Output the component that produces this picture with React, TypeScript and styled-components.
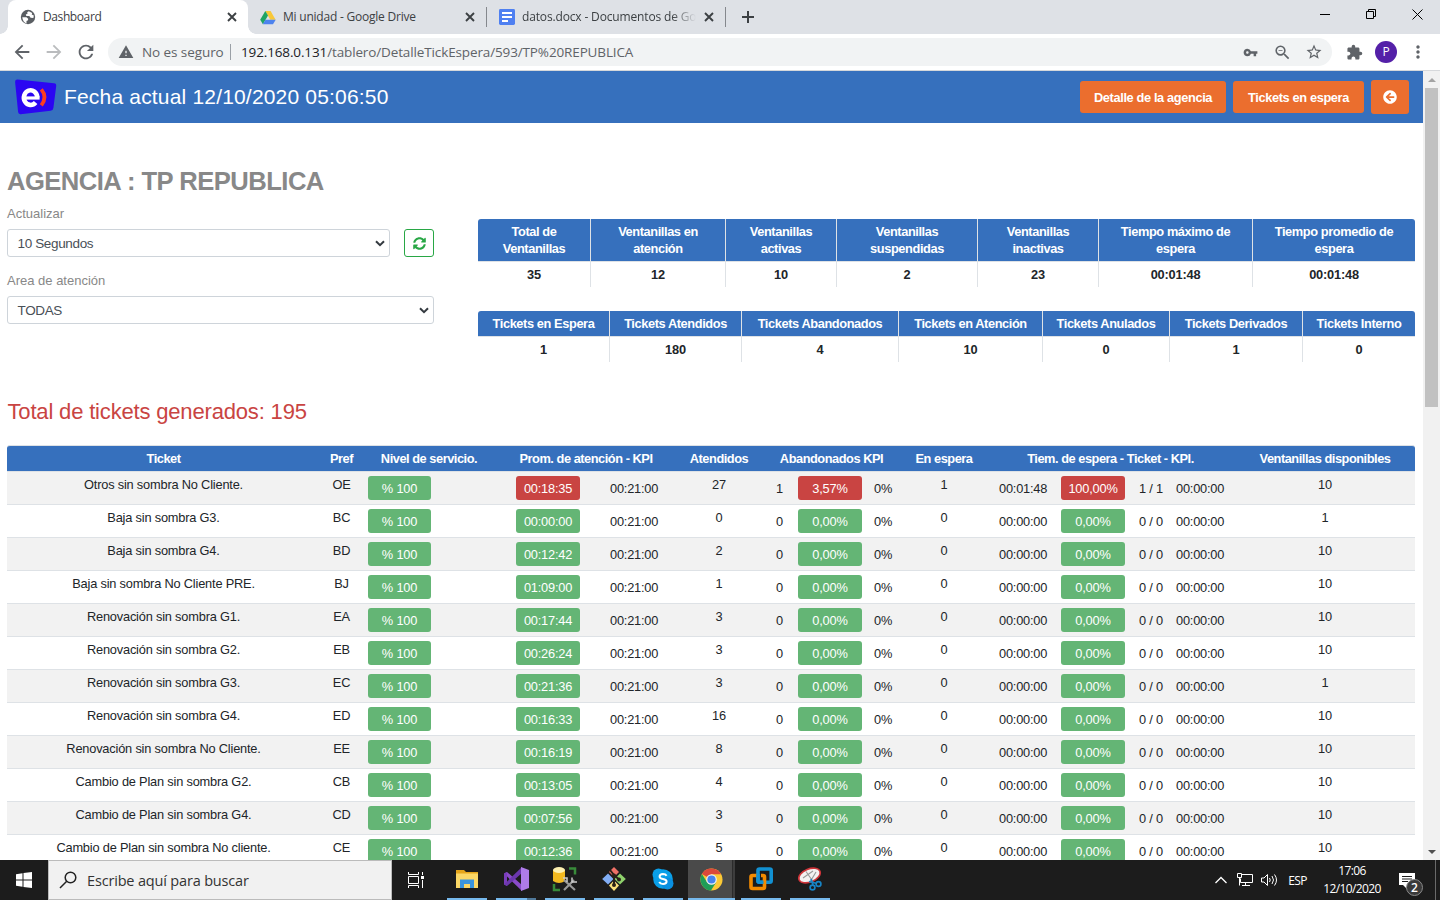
import React from "react";
import styled, { createGlobalStyle } from "styled-components";
import {
  MdArrowBack,
  MdArrowForward,
  MdExtension,
  MdMoreVert,
  MdRefresh,
  MdStarBorder,
  MdVpnKey,
  MdWarning,
  MdZoomOut,
} from "react-icons/md";
import { FaArrowCircleLeft, FaSyncAlt } from "react-icons/fa";

const GlobalStyle = createGlobalStyle`
  * { box-sizing: border-box; }
  body { margin: 0; overflow: hidden; background: #fff; }
`;

const sans = `"Liberation Sans", Arial, sans-serif`;
const ui = `"Open Sans", "Noto Sans", sans-serif`;
const blue = "#3670bd";

const Screen = styled.div`
  width: 1440px;
  height: 900px;
  display: flex;
  flex-direction: column;
  overflow: hidden;
  font-family: ${sans};
  color: #212529;
`;

/* ---------- browser ---------- */

const TabStrip = styled.div`
  height: 34px;
  flex: none;
  display: flex;
  background: #dee1e6;
  padding-left: 8px;
  font-family: ${ui};
`;

const Tab = styled.div<{ $active?: boolean; $width: number }>`
  position: relative;
  width: ${(p) => p.$width}px;
  height: 34px;
  display: flex;
  align-items: center;
  padding: 0 11px 0 12px;
  background: ${(p) => (p.$active ? "#fff" : "transparent")};
  border-radius: 8px 8px 0 0;
  ${(p) =>
    p.$active &&
    `&::before, &::after {
      content: "";
      position: absolute;
      bottom: 0;
      width: 8px;
      height: 8px;
    }
    &::before { left: -8px; background: radial-gradient(circle at 0 0, #dee1e6 7.5px, #fff 8px); }
    &::after { right: -8px; background: radial-gradient(circle at 100% 0, #dee1e6 7.5px, #fff 8px); }`}
`;

const TabTitle = styled.span<{ $spacing: number; $fade?: boolean }>`
  flex: 1;
  margin-left: 7px;
  margin-right: 8px;
  overflow: hidden;
  white-space: nowrap;
  font-size: 12px;
  line-height: 18px;
  letter-spacing: ${(p) => p.$spacing}px;
  color: #3c4043;
  ${(p) => p.$fade && `mask-image: linear-gradient(to right, #000 86%, transparent 100%);`}
`;

const TabDivider = styled.div`
  width: 1px;
  height: 20px;
  margin-top: 7px;
  background: #85888d;
`;

const NewTab = styled.div`
  width: 44px;
  display: flex;
  align-items: center;
  justify-content: center;
`;

const WindowButtons = styled.div`
  margin-left: auto;
  display: flex;
  height: 29px;
`;

const WindowButton = styled.div`
  width: 46px;
  display: flex;
  align-items: center;
  justify-content: center;
`;

const Toolbar = styled.div`
  height: 37px;
  flex: none;
  display: flex;
  align-items: center;
  padding: 0 6px;
  border-bottom: 1px solid #d6d8db;
  background: #fff;
  font-family: ${ui};
`;

const IconSlot = styled.div<{ $color?: string }>`
  width: 32px;
  flex: none;
  display: flex;
  align-items: center;
  justify-content: center;
  color: ${(p) => p.$color ?? "#5f6368"};
`;

const Omnibox = styled.div`
  flex: 1;
  height: 28px;
  margin: 0 6px;
  padding: 0 2px 0 10px;
  display: flex;
  align-items: center;
  border-radius: 14px;
  background: #f1f3f4;
  font-size: 13.5px;
  line-height: 20px;
  white-space: nowrap;
  color: #5f6368;
`;

const Security = styled.span`
  width: 88px;
  margin-left: 8px;
  letter-spacing: -0.08px;
`;

const OmniDivider = styled.div`
  width: 1px;
  height: 16px;
  margin-right: 10px;
  background: #9aa0a6;
`;

const Url = styled.span`
  flex: 1;
  letter-spacing: -0.13px;
  b { font-weight: 400; color: #202124; }
`;

const Avatar = styled.div`
  width: 22px;
  height: 22px;
  border-radius: 50%;
  background: #5420a8;
  color: #fff;
  font-size: 12px;
  line-height: 22px;
  text-align: center;
`;

/* ---------- page ---------- */

const Viewport = styled.div`
  height: 789px;
  flex: none;
  display: flex;
  overflow: hidden;
`;

const Page = styled.main`
  width: 1423px;
  height: 789px;
  overflow: hidden;
`;

const Scrollbar = styled.div`
  width: 17px;
  height: 789px;
  display: flex;
  flex-direction: column;
  align-items: center;
  background: #f1f1f1;
`;

const ScrollArrow = styled.div`
  height: 17px;
  display: flex;
  align-items: center;
`;

const ScrollThumb = styled.div`
  width: 13px;
  height: 319px;
  margin-bottom: auto;
  background: #c1c1c1;
`;

const Header = styled.header`
  height: 52px;
  display: flex;
  align-items: center;
  padding: 0 14px;
  background: ${blue};
  color: #fff;
`;

const HeaderTitle = styled.div`
  flex: 1;
  margin-left: 7px;
  font-size: 21px;
  letter-spacing: 0.18px;
  line-height: 30px;
`;

const HeaderButton = styled.button<{ $width: number; $tall?: boolean }>`
  width: ${(p) => p.$width}px;
  height: ${(p) => (p.$tall ? 34 : 32)}px;
  margin-left: 7px;
  padding: 0;
  display: flex;
  align-items: center;
  justify-content: center;
  border: 0;
  border-radius: 3px;
  background: #eb6e2e;
  color: #fff;
  font: bold 12.8px ${sans};
  letter-spacing: -0.37px;
`;

const Overview = styled.section`
  display: flex;
  height: 268px;
  padding: 42px 8px 0 7px;
`;

const Filters = styled.div`
  width: 427px;
  margin-right: 44px;
`;

const Agency = styled.h1`
  margin: 0;
  font-size: 25.6px;
  line-height: 32px;
  font-weight: bold;
  letter-spacing: -0.53px;
  color: #888;
  white-space: nowrap;
`;

const FieldLabel = styled.div<{ $top: number }>`
  margin-top: ${(p) => p.$top}px;
  height: 19px;
  font-size: 13px;
  line-height: 19px;
  color: #888;
`;

const FieldRow = styled.div`
  display: flex;
  justify-content: space-between;
  margin-top: 6px;
`;

const Select = styled.div<{ $width: number }>`
  width: ${(p) => p.$width}px;
  height: 28px;
  display: flex;
  align-items: center;
  justify-content: space-between;
  padding: 0 4px 0 9.5px;
  border: 1px solid #ced4da;
  border-radius: 3px;
  font-size: 13.5px;
  letter-spacing: -0.35px;
  color: #495057;
`;

const RefreshButton = styled.button`
  width: 30px;
  height: 28px;
  padding: 0;
  display: flex;
  align-items: center;
  justify-content: center;
  border: 1px solid #28a745;
  border-radius: 3px;
  background: #fff;
  color: #28a745;
`;

const Stats = styled.div`
  width: 937px;
  padding-top: 54px;
`;

const StatTable = styled.div<{ $columns: string; $head: number }>`
  display: grid;
  grid-template-columns: ${(p) => p.$columns};
  grid-template-rows: ${(p) => p.$head}px 26px;
  margin-bottom: 24px;
  border-radius: 3px 3px 0 0;
  overflow: hidden;
  font-size: 12.8px;
  line-height: 17px;
  font-weight: bold;
  text-align: center;
`;

const StatHead = styled.div`
  display: flex;
  align-items: center;
  justify-content: center;
  background: ${blue};
  color: #fff;
  letter-spacing: -0.4px;
  white-space: pre-line;
  border-right: 1px solid #dee2e6;
  &:nth-child(7) { border-right: 0; }
`;

const StatValue = styled.div`
  padding-top: 4px;
  border-top: 1px solid #dee2e6;
  border-right: 1px solid #dee2e6;
  letter-spacing: -0.2px;
  &:last-child { border-right: 0; }
`;

const Total = styled.h2`
  margin: 0 0 0 7.5px;
  height: 54px;
  padding-top: 6px;
  font-size: 22px;
  line-height: 30px;
  font-weight: 400;
  letter-spacing: -0.17px;
  color: #c94442;
`;

const TicketTable = styled.div`
  width: 1408px;
  margin-left: 7px;
  font-size: 12.8px;
  line-height: 18px;
`;

const TicketRow = styled.div<{ $striped?: boolean; $head?: boolean }>`
  display: grid;
  grid-template-columns: 313px 43px 132px 182px 84px 141px 84px 249px 180px;
  height: ${(p) => (p.$head ? 26 : 33)}px;
  border-top: 1px solid #dee2e6;
  text-align: center;
  background: ${(p) => (p.$head ? blue : p.$striped ? "#f2f2f2" : "#fff")};
  ${(p) =>
    p.$head &&
    `color: #fff; font-weight: bold; line-height: 26px; letter-spacing: -0.46px; border-radius: 3px 3px 0 0;`}
`;

const Cell = styled.div`
  padding-top: 4px;
  letter-spacing: -0.19px;
`;

const InlineCell = styled.div<{ $left: number }>`
  display: flex;
  height: 32px;
  align-items: center;
  padding-left: ${(p) => p.$left}px;
  white-space: nowrap;
`;

const Badge = styled.span<{ $bad?: boolean; $width?: number }>`
  width: ${(p) => p.$width ?? 64}px;
  height: 24px;
  border-radius: 3px;
  line-height: 25px;
  text-align: center;
  letter-spacing: -0.2px;
  color: #fff;
  background: ${(p) => (p.$bad ? "#c94442" : "#64b575")};
`;

const Value = styled.span<{ $width: number; $left?: number }>`
  width: ${(p) => p.$width}px;
  margin-left: ${(p) => p.$left ?? 0}px;
  padding-top: 1px;
  text-align: left;
  letter-spacing: -0.22px;
`;

/* ---------- taskbar ---------- */

const Taskbar = styled.footer`
  height: 40px;
  flex: none;
  display: flex;
  background: #1c1c1c;
  color: #fff;
  font-family: ${ui};
`;

const StartButton = styled.div`
  width: 48px;
  display: flex;
  align-items: center;
  justify-content: center;
`;

const Search = styled.div`
  width: 344px;
  display: flex;
  align-items: center;
  padding-left: 10px;
  background: #f1f1f1;
  border: 1px solid #bbb;
  color: #333;
  font-size: 14.5px;
  letter-spacing: -0.17px;
  span { margin-left: 9px; }
`;

const TaskView = styled.div`
  width: 48px;
  display: flex;
  align-items: center;
  justify-content: center;
`;

const Apps = styled.div`
  display: flex;
  margin-left: 2px;
`;

const AppSlot = styled.div<{ $active?: boolean }>`
  width: ${(p) => (p.$active ? 47 : 49)}px;
  margin: ${(p) => (p.$active ? "0 1px" : "0")};
  height: 40px;
  padding: 0 ${(p) => (p.$active ? "0" : "4px 0 5px")};
  background: ${(p) =>
    p.$active ? "linear-gradient(to right, #4a4a4a 44px, #2b2b2b 44px, #2b2b2b 45px, #3d3d3d 45px)" : "none"};
`;

const AppInner = styled.div<{ $stacked?: boolean }>`
  height: 40px;
  display: flex;
  align-items: center;
  justify-content: center;
  padding-bottom: 2px;
  background: ${(p) =>
      p.$stacked ? "linear-gradient(to right, #76b9ed 31px, #50799a 31px)" : "linear-gradient(#76b9ed, #76b9ed)"}
    bottom / 100% 2px no-repeat;
`;

const Tray = styled.div`
  margin-left: auto;
  display: flex;
  align-items: center;
`;

const TraySlot = styled.div<{ $width: number }>`
  width: ${(p) => p.$width}px;
  display: flex;
  justify-content: center;
  font-size: 12px;
  letter-spacing: -0.6px;
`;

const Clock = styled.div`
  width: 76px;
  text-align: center;
  font-size: 12px;
  line-height: 18px;
  letter-spacing: -0.6px;
`;

const Notifications = styled.div`
  position: relative;
  width: 34px;
  height: 40px;
  padding: 12px 0 0 9px;
`;

const Count = styled.span`
  position: absolute;
  left: 16px;
  top: 19px;
  width: 17px;
  height: 17px;
  border: 1px solid #8a8a8a;
  border-radius: 50%;
  background: #3a3a3a;
  font: 600 12px/15px ${ui};
  text-align: center;
`;

const ShowDesktop = styled.div`
  width: 5px;
  height: 40px;
  margin-left: 11px;
  border-left: 1px solid #6a6a6a;
`;

/* ---------- drawings ---------- */

const Cross = () => (
  <svg width="10" height="10" viewBox="0 0 10 10" stroke="#3c4043" strokeWidth="1.9">
    <path d="M1 1l8 8M9 1l-8 8" />
  </svg>
);

const GlobeIcon = () => (
  <svg width="16" height="16" viewBox="0 0 16 16">
    <circle cx="8" cy="8" r="7.2" fill="#5a5e63" />
    <path d="M2.300 8.200h4.200l1.700 1.500-.2 1.600-1.500.8v2.300Q2.700 13 2.300 8.200z" fill="#fff" />
    <path d="M8.800 2.200l-1.600 1 .3 1.500-1.700.9.500 1.300 3 .2 1.300 1.600 2.800.4.400-2.600-2.100-.9.500-1.600z" fill="#fff" />
  </svg>
);

const DriveIcon = () => (
  <svg width="16" height="15" viewBox="0 0 16 15">
    <path d="M5.3 1h5.3l5 8.7h-5.3z" fill="#f8c839" />
    <path d="M5.3 1l2.7 4.6L2.9 14.2.2 9.7z" fill="#1fa463" />
    <path d="M5.4 9.7h10.3L13 14.2H2.8z" fill="#4d83ee" />
  </svg>
);

const DocsIcon = () => (
  <svg width="16" height="16" viewBox="0 0 16 16">
    <rect width="16" height="16" rx="1.4" fill="#4f80f1" />
    <path d="M3 4h10M3 8h10M3 12h6" stroke="#fff" strokeWidth="1.8" />
  </svg>
);

const EntelLogo = () => (
  <svg width="43" height="36" viewBox="0 0 43 36">
    <path d="M3.5.6L40 4.2q2.5.3 2.2 2.8L39.4 29q-.3 2.5-2.8 2.8L6.6 35.2q-2.300.2-2.500-2.100L1.100 3Q1 .5 3.500.6z" fill="#2b06f2" />
    <path d="M23.300 18.300a6.700 7.300 0 1 0-1.700 5.200" fill="none" stroke="#fff" strokeWidth="4.600" />
    <path d="M10 19h15.600" stroke="#fff" strokeWidth="3.200" />
    <path d="M27.300 10.400q6.400 7.600 0 16" fill="none" stroke="#ff3d1f" strokeWidth="3.800" />
  </svg>
);

const Caret = () => (
  <svg width="10" height="7" viewBox="0 0 10 7" fill="none" stroke="#343a40" strokeWidth="2">
    <path d="M1 1.200l4 4 4-4" />
  </svg>
);

const FolderIcon = () => (
  <svg width="22" height="20" viewBox="0 0 22 20">
    <path d="M0 1h8l2 2h12v16H0z" fill="#e5a51a" />
    <path d="M0 4.500h22V19H0z" fill="#fbd766" />
    <path d="M4 10.500h14V19h-4v-4H8v4H4z" fill="#3a94dc" />
  </svg>
);

const VisualStudioIcon = () => (
  <svg width="25" height="24" viewBox="0 0 25 24">
    <path d="M0 6.500l3-1.500L18 18v6z" fill="#8a4bc9" />
    <path d="M0 6.500l3-1.500v14l-3-1.500z" fill="#7a3dbb" />
    <path d="M3 19L18 6V0L0 17.500z" fill="#6b37ad" />
    <path d="M17 0l8 3v18l-8 3z" fill="#ae7be8" />
  </svg>
);

const SqlToolsIcon = () => (
  <svg width="26" height="26" viewBox="0 0 26 26" fill="none">
    <path d="M1 4v11q6 4 12 0V4z" fill="#f2b91f" />
    <ellipse cx="7" cy="4" rx="6" ry="3" fill="#fdf0b0" />
    <path d="M17 2.500h6v6M2 18v6h6" stroke="#388b3a" strokeWidth="2.500" />
    <path d="M12 14l11 10M22 14L12 24" stroke="#999" strokeWidth="2.200" />
    <path d="M20 11.500v4.500h5M11 12h4v4" stroke="#ccc" strokeWidth="1.500" />
  </svg>
);

const GitIcon = () => (
  <svg width="26" height="26" viewBox="0 0 26 26">
    <path d="M13 1l5 5-5 5-5-5z" fill="#f07167" />
    <path d="M7 7.500l5.500 5.500L7 18.500 1.200 13z" fill="#82aef5" />
    <path d="M19 7.500L24.800 13 19 18.500 13.500 13z" fill="#8fd16c" />
    <path d="M13 14.500l5 5-5 5.500-5-5.500z" fill="#fbe07a" />
    <path d="M9 4l4 5v10M13 9l5 4.500" fill="none" stroke="#2a2018" strokeWidth="2" />
    <circle cx="13" cy="9.500" r="2" fill="#2a2018" />
    <circle cx="18" cy="13.500" r="2" fill="#2a2018" />
    <circle cx="13" cy="19" r="2" fill="#2a2018" />
  </svg>
);

const SkypeIcon = () => (
  <svg width="22" height="22" viewBox="0 0 22 22">
    <circle cx="11" cy="11" r="9.800" fill="#0a9fe8" />
    <circle cx="6.500" cy="6.500" r="6" fill="#0a9fe8" />
    <circle cx="15.500" cy="15.500" r="6" fill="#0a8fe0" />
    <path d="M14.600 7.800Q13.500 6 11 6 7.600 6.100 7.600 8.400q0 1.900 3.400 2.500 3.600.6 3.600 2.700 0 2.400-3.600 2.500-2.600 0-3.800-2" fill="none" stroke="#fff" strokeWidth="2" />
  </svg>
);

const ChromeIcon = () => (
  <svg width="23" height="23" viewBox="0 0 24 24">
    <circle cx="12" cy="12" r="11.500" fill="#fbc936" />
    <path d="M12 12L2 6.200A11.500 11.500 0 0 1 22 6.500H12z" fill="#dc483b" />
    <path d="M2 6.200A11.500 11.500 0 0 0 11.500 23.500L17 14.700 7.200 14.500z" fill="#1f9d58" />
    <circle cx="12" cy="12" r="5.500" fill="#f4f4f4" />
    <circle cx="12" cy="12" r="4.300" fill="#4683ee" />
  </svg>
);

const VmwareIcon = () => (
  <svg width="24" height="24" viewBox="0 0 24 24" fill="none" strokeWidth="3.600">
    <rect x="9" y="2" width="13.200" height="13.200" rx="1.500" stroke="#1291d2" />
    <path d="M8 8.500H3.500q-1.500 0-1.500 1.500v10q0 1.500 1.500 1.500h10.500q1.500 0 1.500-1.500v-10q0-1.500-1.500-1.500h-2" stroke="#f38b00" />
    <path d="M9 7v6.700q0 1.500 1.500 1.500h4" stroke="#1291d2" />
  </svg>
);

const SnipIcon = () => (
  <svg width="26" height="26" viewBox="0 0 26 26" fill="none">
    <ellipse cx="12.500" cy="9.500" rx="11.300" ry="6.500" transform="rotate(-22 12.500 9.500)" fill="#f3f1f1" stroke="#cf3338" strokeWidth="1.600" />
    <path d="M6 12l10-7M9 5.500l7 10M19 6l-6 10" stroke="#999" strokeWidth="1.100" />
    <circle cx="15.500" cy="21.500" r="2.400" stroke="#1783c4" strokeWidth="1.700" />
    <circle cx="21.500" cy="18" r="2.400" stroke="#1783c4" strokeWidth="1.700" />
    <path d="M14 13l2 6M12 15.500l8 2" stroke="#1783c4" strokeWidth="1.700" />
  </svg>
);

/* ---------- data ---------- */

const statsA: [string, string][] = [
  ["Total de\nVentanillas", "35"],
  ["Ventanillas en\natención", "12"],
  ["Ventanillas\nactivas", "10"],
  ["Ventanillas\nsuspendidas", "2"],
  ["Ventanillas\ninactivas", "23"],
  ["Tiempo máximo de\nespera", "00:01:48"],
  ["Tiempo promedio de\nespera", "00:01:48"],
];

const statsB: [string, string][] = [
  ["Tickets en Espera", "1"],
  ["Tickets Atendidos", "180"],
  ["Tickets Abandonados", "4"],
  ["Tickets en Atención", "10"],
  ["Tickets Anulados", "0"],
  ["Tickets Derivados", "1"],
  ["Tickets Interno", "0"],
];

const heads = [
  "Ticket",
  "Pref",
  "Nivel de servicio.",
  "Prom. de atención - KPI",
  "Atendidos",
  "Abandonados KPI",
  "En espera",
  "Tiem. de espera - Ticket - KPI.",
  "Ventanillas disponibles",
];

type Ticket = { name: string; pref: string; avg: string; served: number; desks: number; late?: boolean };

const tickets: Ticket[] = [
  { name: "Otros sin sombra No Cliente.", pref: "OE", avg: "00:18:35", served: 27, desks: 10, late: true },
  { name: "Baja sin sombra G3.", pref: "BC", avg: "00:00:00", served: 0, desks: 1 },
  { name: "Baja sin sombra G4.", pref: "BD", avg: "00:12:42", served: 2, desks: 10 },
  { name: "Baja sin sombra No Cliente PRE.", pref: "BJ", avg: "01:09:00", served: 1, desks: 10 },
  { name: "Renovación sin sombra G1.", pref: "EA", avg: "00:17:44", served: 3, desks: 10 },
  { name: "Renovación sin sombra G2.", pref: "EB", avg: "00:26:24", served: 3, desks: 10 },
  { name: "Renovación sin sombra G3.", pref: "EC", avg: "00:21:36", served: 3, desks: 1 },
  { name: "Renovación sin sombra G4.", pref: "ED", avg: "00:16:33", served: 16, desks: 10 },
  { name: "Renovación sin sombra No Cliente.", pref: "EE", avg: "00:16:19", served: 8, desks: 10 },
  { name: "Cambio de Plan sin sombra G2.", pref: "CB", avg: "00:13:05", served: 4, desks: 10 },
  { name: "Cambio de Plan sin sombra G4.", pref: "CD", avg: "00:07:56", served: 3, desks: 10 },
  { name: "Cambio de Plan sin sombra No cliente.", pref: "CE", avg: "00:12:36", served: 5, desks: 10 },
];

const apps = [FolderIcon, VisualStudioIcon, SqlToolsIcon, GitIcon, SkypeIcon, ChromeIcon, VmwareIcon, SnipIcon];

export default function App() {
  return (
    <Screen>
      <GlobalStyle />
      <TabStrip>
        <Tab $active $width={240}>
          <GlobeIcon />
          <TabTitle $spacing={-0.4}>Dashboard</TabTitle>
          <Cross />
        </Tab>
        <Tab $width={238}>
          <DriveIcon />
          <TabTitle $spacing={-0.22}>Mi unidad - Google Drive</TabTitle>
          <Cross />
        </Tab>
        <TabDivider />
        <Tab $width={238}>
          <DocsIcon />
          <TabTitle $spacing={-0.15} $fade>datos.docx - Documentos de Google</TabTitle>
          <Cross />
        </Tab>
        <TabDivider />
        <NewTab>
          <svg width="12" height="12" viewBox="0 0 12 12" stroke="#3c4043" strokeWidth="2">
            <path d="M6 0v12M0 6h12" />
          </svg>
        </NewTab>
        <WindowButtons>
          <WindowButton>
            <svg width="10" height="10"><path d="M0 4.500h10" stroke="#000" /></svg>
          </WindowButton>
          <WindowButton>
            <svg width="11" height="11" fill="none" stroke="#000">
              <path d="M.5 2.500h7v7h-7zM2.500 2V.5h7v7H8" />
            </svg>
          </WindowButton>
          <WindowButton>
            <svg width="11" height="11" stroke="#000"><path d="M.5.5l10 10M10.500.5l-10 10" /></svg>
          </WindowButton>
        </WindowButtons>
      </TabStrip>
      <Toolbar>
        <IconSlot><MdArrowBack size={22} /></IconSlot>
        <IconSlot $color="#babcbe"><MdArrowForward size={22} /></IconSlot>
        <IconSlot><MdRefresh size={22} /></IconSlot>
        <Omnibox>
          <MdWarning size={16} />
          <Security>No es seguro</Security>
          <OmniDivider />
          <Url><b>192.168.0.131</b>/tablero/DetalleTickEspera/593/TP%20REPUBLICA</Url>
          <IconSlot><MdVpnKey size={15} /></IconSlot>
          <IconSlot><MdZoomOut size={19} /></IconSlot>
          <IconSlot><MdStarBorder size={18} /></IconSlot>
        </Omnibox>
        <IconSlot><MdExtension size={17} /></IconSlot>
        <IconSlot><Avatar>P</Avatar></IconSlot>
        <IconSlot><MdMoreVert size={20} /></IconSlot>
      </Toolbar>

      <Viewport>
        <Page>
          <Header>
            <EntelLogo />
            <HeaderTitle>Fecha actual 12/10/2020 05:06:50</HeaderTitle>
            <HeaderButton $width={146}>Detalle de la agencia</HeaderButton>
            <HeaderButton $width={131}>Tickets en espera</HeaderButton>
            <HeaderButton $width={38} $tall><FaArrowCircleLeft size={14} /></HeaderButton>
          </Header>
          <Overview>
            <Filters>
              <Agency>AGENCIA : TP REPUBLICA</Agency>
              <FieldLabel $top={7}>Actualizar</FieldLabel>
              <FieldRow>
                <Select $width={383}>10 Segundos<Caret /></Select>
                <RefreshButton><FaSyncAlt size={13} /></RefreshButton>
              </FieldRow>
              <FieldLabel $top={14}>Area de atención</FieldLabel>
              <FieldRow>
                <Select $width={427}>TODAS<Caret /></Select>
              </FieldRow>
            </Filters>
            <Stats>
              <StatTable $head={42} $columns="113px 135px 111px 141px 121px 154px 162px">
                {statsA.map(([h]) => <StatHead key={h}>{h}</StatHead>)}
                {statsA.map(([h, v]) => <StatValue key={h}>{v}</StatValue>)}
              </StatTable>
              <StatTable $head={25} $columns="132px 132px 157px 144px 127px 133px 112px">
                {statsB.map(([h]) => <StatHead key={h}>{h}</StatHead>)}
                {statsB.map(([h, v]) => <StatValue key={h}>{v}</StatValue>)}
              </StatTable>
            </Stats>
          </Overview>
          <Total>Total de tickets generados: 195</Total>
          <TicketTable>
            <TicketRow $head>
              {heads.map((h) => <div key={h}>{h}</div>)}
            </TicketRow>
            {tickets.map((t, i) => (
              <TicketRow key={t.pref} $striped={i % 2 === 0}>
                <Cell>{t.name}</Cell>
                <Cell>{t.pref}</Cell>
                <InlineCell $left={5}><Badge $width={63}>% 100</Badge></InlineCell>
                <InlineCell $left={21}>
                  <Badge $bad={t.late}>{t.avg}</Badge>
                  <Value $left={30} $width={50}>00:21:00</Value>
                </InlineCell>
                <Cell>{t.served}</Cell>
                <InlineCell $left={15}>
                  <Value $width={22}>{t.late ? 1 : 0}</Value>
                  <Badge $bad={t.late}>{t.late ? "3,57%" : "0,00%"}</Badge>
                  <Value $left={12} $width={20}>0%</Value>
                </InlineCell>
                <Cell>{t.late ? 1 : 0}</Cell>
                <InlineCell $left={13}>
                  <Value $width={62}>{t.late ? "00:01:48" : "00:00:00"}</Value>
                  <Badge $bad={t.late}>{t.late ? "100,00%" : "0,00%"}</Badge>
                  <Value $left={14} $width={37}>{t.late ? "1 / 1" : "0 / 0"}</Value>
                  <Value $width={50}>00:00:00</Value>
                </InlineCell>
                <Cell>{t.desks}</Cell>
              </TicketRow>
            ))}
          </TicketTable>
        </Page>
        <Scrollbar>
          <ScrollArrow><svg width="8" height="4"><path d="M0 4l4-4 4 4z" fill="#a3a3a3" /></svg></ScrollArrow>
          <ScrollThumb />
          <ScrollArrow><svg width="8" height="4"><path d="M0 0l4 4 4-4z" fill="#505050" /></svg></ScrollArrow>
        </Scrollbar>
      </Viewport>

      <Taskbar>
        <StartButton>
          <svg width="16" height="16" viewBox="0 0 16 16" fill="#fff">
            <path d="M0 2.200L6.500 1.300V7.500H0zM7.500 1.100L16 0V7.500H7.500zM0 8.500H6.500V14.700L0 13.800zM7.500 8.500H16V16L7.500 14.900z" />
          </svg>
        </StartButton>
        <Search>
          <svg width="19" height="18" viewBox="0 0 19 18" fill="none" stroke="#222" strokeWidth="1.500">
            <circle cx="11.500" cy="6.500" r="5.300" />
            <path d="M7.700 10.300L1 17" />
          </svg>
          <span>Escribe aquí para buscar</span>
        </Search>
        <TaskView>
          <svg width="16" height="16" fill="none" stroke="#fff">
            <path d="M.5 4.500h10v7H.5zM.5 0v2.500h10V0M.5 16v-2.500h10V16M14.500 0v3M14.500 8v8" />
            <path d="M13 4h3v3h-3z" fill="#fff" stroke="none" />
          </svg>
        </TaskView>
        <Apps>
          {apps.map((Icon, i) => (
            <AppSlot key={i} $active={i === 5}>
              <AppInner $stacked={i === 1}><Icon /></AppInner>
            </AppSlot>
          ))}
        </Apps>
        <Tray>
          <TraySlot $width={24}>
            <svg width="12" height="8" fill="none" stroke="#fff" strokeWidth="1.300"><path d="M.5 7L6 1.500 11.500 7" /></svg>
          </TraySlot>
          <TraySlot $width={24}>
            <svg width="17" height="14" fill="none" stroke="#fff">
              <path d="M5 1.500h10.500v8H3.500V5.500M8.500 9.500v3M5 12.500h8M.5.500h4v4h-4zM2.500 4.500v8" />
            </svg>
          </TraySlot>
          <TraySlot $width={24}>
            <svg width="17" height="14" fill="none" stroke="#fff">
              <path d="M.5 5v4h2.500l3.500 3.500V1.500L3 5zM8.500 5q1.500 2 0 4M11 3q3 4 0 8M13.500 1.500q4 5.500 0 11" />
            </svg>
          </TraySlot>
          <TraySlot $width={33}>ESP</TraySlot>
          <Clock>17:06<br />12/10/2020</Clock>
          <Notifications>
            <svg width="16" height="16" viewBox="0 0 16 16">
              <path d="M0 0h16v12H8v4l-4-4H0z" fill="#fff" />
              <path d="M3 3.500h10M3 6h10M3 8.500h6" stroke="#1c1c1c" />
            </svg>
            <Count>2</Count>
          </Notifications>
          <ShowDesktop />
        </Tray>
      </Taskbar>
    </Screen>
  );
}
